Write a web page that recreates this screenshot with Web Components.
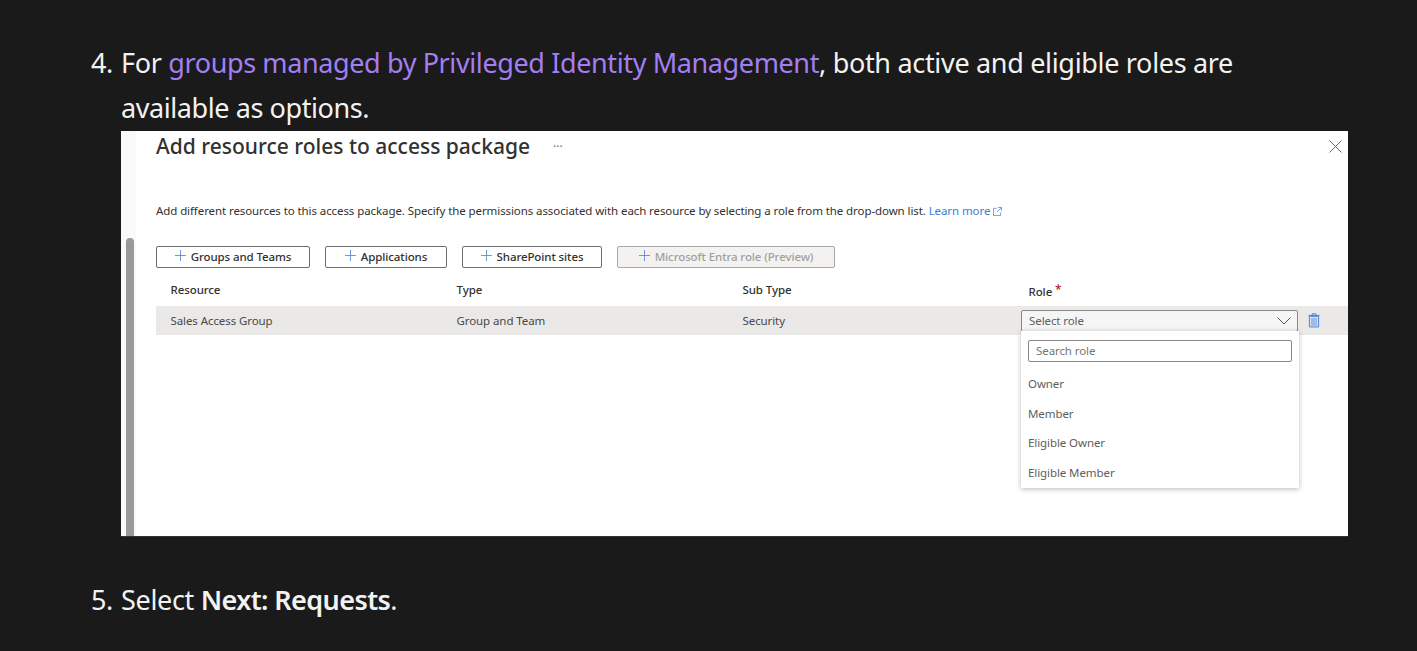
<!DOCTYPE html>
<html lang="en">
<head>
<meta charset="utf-8">
<title>Add resource roles</title>
<style>
  html, body { margin: 0; height: 651px; overflow: hidden; background: #1a1a1a; }
  body { font-family: "Noto Sans", "Open Sans", sans-serif; color: #fff; }
  a { color: #a27ff0; text-decoration: none; letter-spacing: -0.385px; }
  b { font-weight: 600; letter-spacing: -0.6px; }
  .tight { letter-spacing: -0.42px; }
</style>
</head>
<body>
<doc-steps>
  <doc-step n="4">
    For <a href="#">groups managed by Privileged Identity Management</a>, both active and eligible roles are<br><span class="tight">available as options.</span>
    <role-shot slot="figure"></role-shot>
  </doc-step>
  <doc-step n="5">Select <b>Next: Requests</b>.</doc-step>
</doc-steps>

<script>
class DocSteps extends HTMLElement {
  constructor() {
    super();
    this.attachShadow({ mode: 'open' }).innerHTML = `
      <style>
        :host { display: flex; flex-direction: column; gap: 40px; padding: 40px 69px 0 121px; }
      </style>
      <slot></slot>`;
  }
}

class DocStep extends HTMLElement {
  constructor() {
    super();
    this.attachShadow({ mode: 'open' }).innerHTML = `
      <style>
        :host { display: block; position: relative; font-size: 27px; line-height: 45px; letter-spacing: -0.32px; color: #f2f2f2; }
        .num { position: absolute; right: 100%; margin-right: 8px; }
        .text { display: block; }
        ::slotted(role-shot) { margin-top: 1px; }
      </style>
      <span class="num"></span>
      <span class="text"><slot></slot></span>
      <slot name="figure"></slot>`;
  }
  connectedCallback() {
    this.shadowRoot.querySelector('.num').textContent = this.getAttribute('n') + '.';
  }
}

class RoleButton extends HTMLElement {
  constructor() {
    super();
    this.attachShadow({ mode: 'open' }).innerHTML = `
      <style>
        :host { display: flex; align-items: center; justify-content: center; gap: 5px; height: 22px; box-sizing: border-box; padding-bottom: 1px;
          border: 1px solid #6e6e6e; border-radius: 2px; font-size: 11.5px; font-weight: 500; color: #323130; letter-spacing: -0.1px; }
        :host([disabled]) { background: #f3f2f1; border-color: #a8a8a8; color: #a19f9d; }
        svg { width: 11px; height: 11px; flex: none; margin-top: -2px; }
      </style>
      <svg viewBox="0 0 11 11"><path d="M5.5 0v11M0 5.5h11" stroke="#4f7bd6" stroke-width=".8" fill="none"/></svg>
      <slot></slot>`;
  }
}

class RoleDropdown extends HTMLElement {
  constructor() {
    super();
    this.attachShadow({ mode: 'open' }).innerHTML = `
      <style>
        :host { display: block; position: relative; width: 277px; font-size: 11.5px; color: #605e5c; }
        .select { display: flex; align-items: center; justify-content: space-between; height: 22px; box-sizing: border-box;
          padding: 0 6px 0 7.5px; background: #f5f5f5; border: 1px solid #8a8886; border-radius: 2px; }
        .menu { position: absolute; top: 21px; left: 0; right: -1px; height: 157px; box-sizing: border-box; padding: 9px 7px 0 7.5px;
          background: #fff; box-shadow: 0 1px 5px rgba(0,0,0,.28); }
        .search { height: 22px; box-sizing: border-box; padding: 0 7px; display: flex; align-items: center;
          border: 1px solid #8a8886; border-radius: 2px; color: #777; margin-bottom: 7.4px; }
        .opt { height: 29.6px; display: flex; align-items: center; }
      </style>
      <div class="select">
        <span>Select role</span>
        <svg width="14" height="8" viewBox="0 0 14 8"><path d="M.5.5 7 7l6.5-6.5" stroke="#555" fill="none"/></svg>
      </div>
      <div class="menu">
        <div class="search">Search role</div>
        <div class="opt">Owner</div>
        <div class="opt">Member</div>
        <div class="opt">Eligible Owner</div>
        <div class="opt">Eligible Member</div>
      </div>`;
  }
}

class RoleShot extends HTMLElement {
  constructor() {
    super();
    this.attachShadow({ mode: 'open' }).innerHTML = `
      <style>
        :host { display: block; position: relative; height: 406px; background: linear-gradient(90deg, #f9f9f9 15px, #fff 15px); color: #323130;
          font-family: "Noto Sans", "Open Sans", sans-serif; line-height: normal; letter-spacing: -0.087px; overflow: hidden; border-bottom: 1px solid #333; box-sizing: border-box; }
        .scroll { position: absolute; left: 5px; top: 107px; bottom: 0; width: 8px; background: #999; border-radius: 4px 4px 0 0; }
        .close { position: absolute; right: 6px; top: 9px; }
        .body { padding-left: 35px; }
        .title { display: flex; align-items: center; gap: 23px; height: 30px; font-size: 21px; font-weight: 500; letter-spacing: 0; color: #323130; }
        .dots { font-size: 12px; font-weight: 400; color: #777; }
        .desc { margin-top: 39px; height: 22px; line-height: 22px; font-size: 11.5px; white-space: nowrap; }
        .desc a { color: #3b7dd8; text-decoration: none; letter-spacing: inherit; }
        .desc svg { vertical-align: -1px; }
        .buttons { display: flex; gap: 15px; margin-top: 24px; }
        .grid { display: grid; grid-template-columns: 286px 286px 286px 1fr; padding-left: 14.5px; font-size: 11.5px; }
        .head { margin: 7px 0 3px; height: 28px; align-items: center; font-weight: 500; }
        .head .req { margin-top: 4px; }
        .head i { color: #a4262c; font-style: normal; font-size: 12px; line-height: 10px; margin-left: 0; vertical-align: 2px; }
        .row { height: 29px; align-items: center; background: #ebe9e7; color: #4a4846; }
        .role { display: flex; align-items: center; gap: 10px; margin-left: -8px; }
      </style>
      <div class="scroll"></div>
      <svg class="close" width="13" height="13" viewBox="0 0 13 13"><path d="M.5.5l12 12M12.5.5l-12 12" stroke="#666" fill="none"/></svg>
      <div class="body">
        <div class="title"><span>Add resource roles to access package</span><span class="dots">···</span></div>
        <div class="desc">Add different resources to this access package. Specify the permissions associated with each resource by selecting a role from the drop-down list. <a href="#">Learn more
          <svg width="9" height="9" viewBox="0 0 10 10"><path d="M4 1.5H.5v8h8V6M5.5.5h4v4M9.5.5l-5 5" stroke="#3b7dd8" fill="none" stroke-width=".8"/></svg></a></div>
        <div class="buttons">
          <role-button style="width:154px">Groups and Teams</role-button>
          <role-button style="width:122px">Applications</role-button>
          <role-button style="width:140px">SharePoint sites</role-button>
          <role-button style="width:218px" disabled>Microsoft Entra role (Preview)</role-button>
        </div>
        <div class="grid head"><span>Resource</span><span>Type</span><span>Sub Type</span><span class="req">Role <i>*</i></span></div>
        <div class="grid row">
          <span>Sales Access Group</span><span>Group and Team</span><span>Security</span>
          <span class="role">
            <role-dropdown></role-dropdown>
            <svg width="12" height="15" viewBox="0 0 13 16"><path d="M1.5 3.5h10V15h-10zM.5 2.5h12M4.5 2V.8h4V2" stroke="#3b7dd8" fill="none"/><path d="M3 5h7v9H3z" fill="#9dbce8"/></svg>
          </span>
        </div>
      </div>`;
  }
}

customElements.define('doc-steps', DocSteps);
customElements.define('doc-step', DocStep);
customElements.define('role-button', RoleButton);
customElements.define('role-dropdown', RoleDropdown);
customElements.define('role-shot', RoleShot);
</script>
</body>
</html>
